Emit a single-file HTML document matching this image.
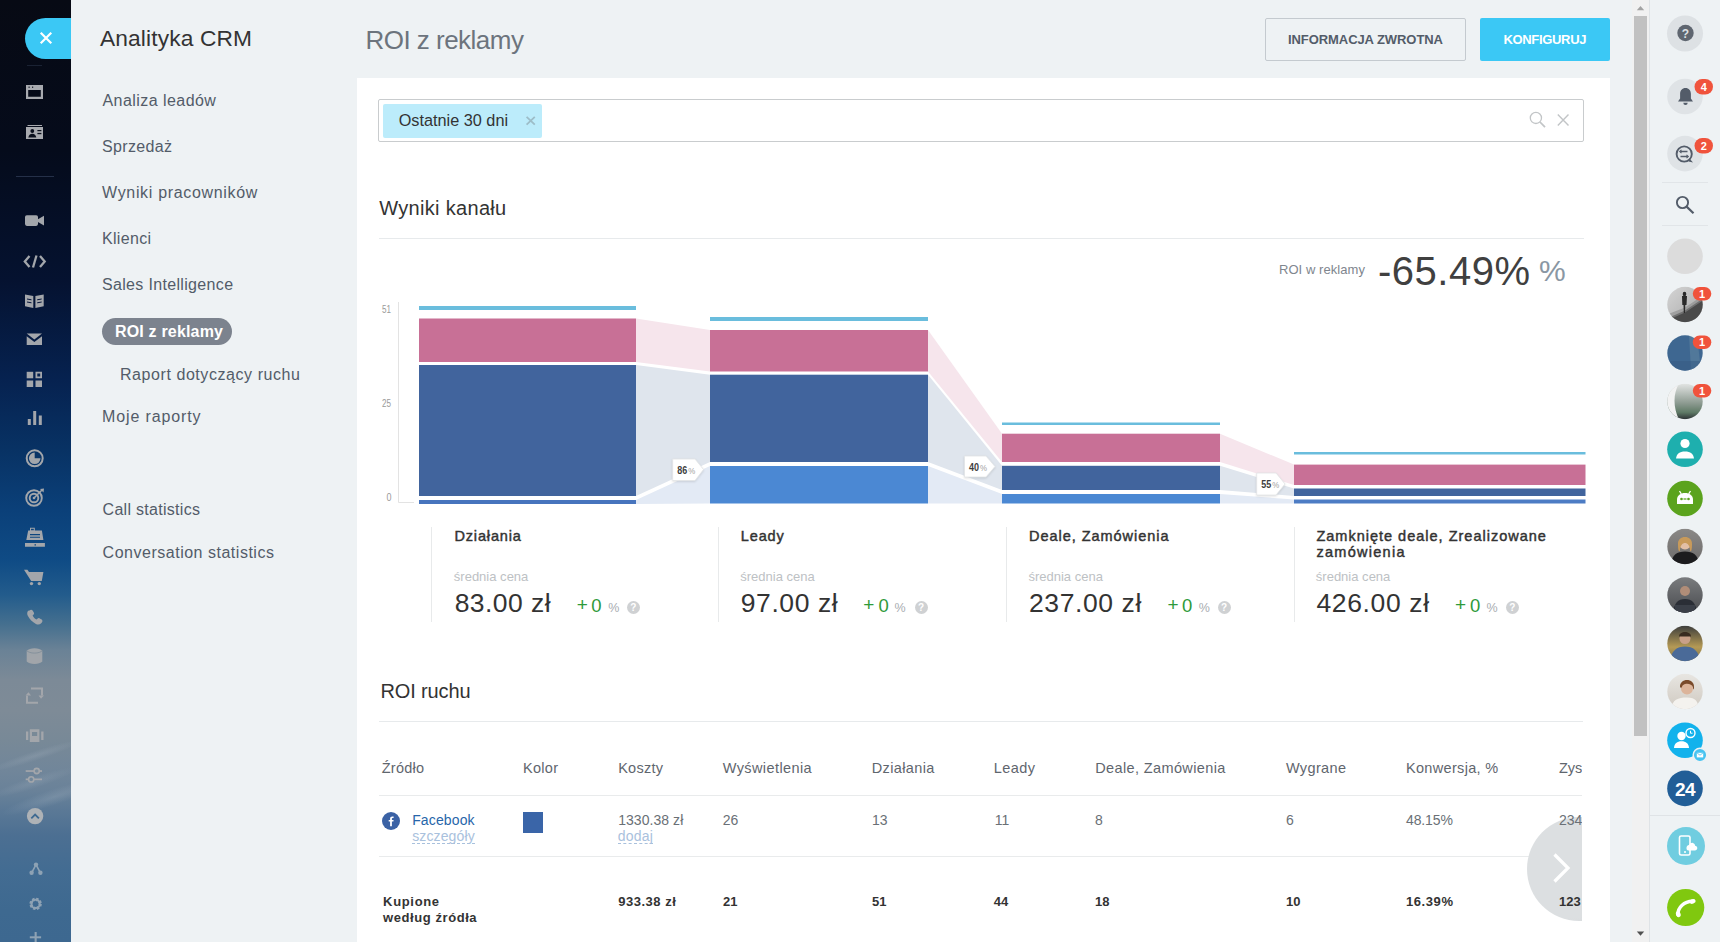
<!DOCTYPE html>
<html><head><meta charset="utf-8">
<style>
*{box-sizing:border-box;margin:0;padding:0}
html,body{width:1720px;height:942px;overflow:hidden;background:#eef2f4;font-family:"Liberation Sans",sans-serif;position:relative}
.t{position:absolute;white-space:nowrap;line-height:1}
.a{position:absolute}
</style></head><body>
<div class="a" style="left:0;top:0;width:71px;height:942px;background:linear-gradient(180deg,#070a14 0px,#050b1b 150px,#051230 280px,#062250 380px,#083264 450px,#0b4079 510px,#0f4b85 560px,#235c8c 595px,#46708f 625px,#6a8296 650px,#7c8a97 680px,#7e8b97 710px,#788997 740px,#71869a 770px,#6a8299 790px,#5b7996 810px,#4c6f92 835px,#436c92 870px,#3e6990 910px,#3d6890 942px)"></div>
<div class="a" style="left:0;top:700px;width:71px;height:140px;overflow:hidden"><div class="a" style="left:-30px;top:0px;width:140px;height:140px;transform:rotate(-18deg);background:radial-gradient(ellipse 50px 5px at 70px 55px,rgba(190,200,210,.18),transparent),radial-gradient(ellipse 45px 6px at 60px 80px,rgba(190,200,210,.16),transparent),radial-gradient(ellipse 55px 8px at 75px 100px,rgba(190,200,210,.2),transparent)"></div></div>
<div class="a" style="left:25px;top:18px;width:46px;height:41px;background:#3bc8f5;border-radius:21px 0 0 21px"></div>
<svg class="a" style="left:0;top:0" width="71" height="942" viewBox="0 0 71 942">
<g stroke="#fff" stroke-width="2.2" stroke-linecap="square"><path d="M41.5 33.5L50.5 42.5M50.5 33.5L41.5 42.5"/></g>
<g fill="#a8aaaf" stroke="none">
<!-- window -->
<path d="M26 85h17v14h-17z M28.2 90h12.6v6.8h-12.6z" fill-rule="evenodd"/>
<!-- card -->
<rect x="27.5" y="125" width="14.5" height="1"/>
<path d="M26 127h17v12h-17z" />
</g>
<g fill="#0a0f1c">
<rect x="28.5" y="86.6" width="1.2" height="1.2"/><rect x="32" y="86.6" width="1.2" height="1.2"/>
<circle cx="32.3" cy="131" r="1.9"/><path d="M28.3 137.5c0.4-2.4 1.8-3.8 4-3.8s3.6 1.4 4 3.8z"/>
<rect x="37.4" y="130" width="4" height="1.2"/><rect x="37.4" y="132.9" width="4" height="1.3"/>
</g>
<rect x="27" y="65" width="15" height="1" fill="#1a2233"/>
<rect x="16" y="176" width="38" height="1" fill="#253049"/>
<g fill="#a3a6ab">
<!-- video -->
<rect x="25" y="215.3" width="13" height="10.6" rx="1.8"/><path d="M37.5 219.5L44 215.8v9.6L37.5 221.7z"/>
<!-- code -->
<path d="M29.5 256L24.8 261.5L29.5 267" fill="none" stroke="#a3a6ab" stroke-width="2.3"/>
<path d="M40 256L44.7 261.5L40 267" fill="none" stroke="#a3a6ab" stroke-width="2.3"/>
<path d="M36.5 255.5L33 267.5" fill="none" stroke="#a3a6ab" stroke-width="2.3"/>
<!-- book -->
<path d="M25 294.5l8.3 1.5v12l-8.3-1.8z M43.7 294.5l-8.3 1.5v12l8.3-1.8z"/><path d="M27 299l4.5 0.8M27 302l4.5 0.8M37.2 299.8l4.5-0.8M37.2 302.8l4.5-0.8" stroke="#06153a" stroke-width="1"/>
<!-- envelope -->
<path d="M26.7 333.6h15.3l-7.65 5.8z M26.7 336.2l7.65 5.8 7.65-5.8v8.8h-15.3z"/>
<!-- grid -->
<rect x="26.7" y="371.8" width="6.5" height="6.5"/><path d="M35.5 371.8h6.5v6.5h-6.5z M37.3 373.6v2.9h2.9v-2.9z" fill-rule="evenodd"/>
<rect x="26.7" y="380.5" width="6.5" height="6.5"/><rect x="35.5" y="380.5" width="6.5" height="6.5"/>
<!-- bars -->
<rect x="27.8" y="419" width="3" height="6"/><rect x="33.2" y="411" width="3" height="14"/><rect x="38.8" y="415.5" width="3" height="9.5"/>
<!-- pie clock -->
<circle cx="34.7" cy="458.3" r="8" fill="none" stroke="#a3a6ab" stroke-width="2"/>
<path d="M34.7 452.5v5.8h5.8a5.8 5.8 0 1 1-5.8-5.8z"/>
<!-- target -->
<circle cx="34" cy="498" r="7.8" fill="none" stroke="#a3a6ab" stroke-width="1.9"/>
<circle cx="34" cy="498" r="4.3" fill="none" stroke="#a3a6ab" stroke-width="1.9"/>
<circle cx="34" cy="498" r="1.3"/>
<path d="M34 498L42 490" stroke="#a3a6ab" stroke-width="1.6"/><path d="M40 489l4-0.5-0.5 4z"/>
<!-- register -->
<path d="M30 527.8h4.8v3.4h-4.8z M31 528.8v1.6h2.8v-1.6z" fill-rule="evenodd"/><path d="M28.2 530.6h13.7l1.5 9.4h-17.1z M30 534v1.2h10v-1.2z M30 536.7v1.1h10v-1.1z" fill-rule="evenodd"/><path d="M25 543h19.9v3.7h-19.9z M34.5 544.2v1.3h1.5v-1.3z" fill-rule="evenodd"/>
<!-- cart -->
<path d="M24 569.8h3.4l1.6 2.2h14.4l-1.6 8.9h-10.6z"/><circle cx="31.5" cy="583.6" r="1.7"/><circle cx="39.3" cy="583.6" r="1.7"/>
<!-- phone -->
<path d="M29.5 610.5c1-1 2.4-1 3.1 0l1.2 2c0.5 0.8 0.3 1.7-0.4 2.3l-0.8 0.6c0.8 1.9 2.3 3.4 4.2 4.2l0.6-0.8c0.6-0.7 1.5-0.9 2.3-0.4l2 1.2c1 0.7 1 2.1 0 3.1l-0.8 0.8c-1.2 1.2-3.2 1.3-5 0.4-3.5-1.8-6.3-4.6-8.1-8.1-0.9-1.8-0.8-3.8 0.4-5z"/>
<!-- box -->
<path d="M34.5 648.3c3.5 0 6.3 1 7.8 2.4v10.8c-1.5 1.5-4.3 2.5-7.8 2.5s-6.3-1-7.8-2.5v-10.8c1.5-1.4 4.3-2.4 7.8-2.4z" opacity=".95"/><path d="M26.7 650.7c1.5 1.4 4.3 2.4 7.8 2.4s6.3-1 7.8-2.4" fill="none" stroke="#7d8c98" stroke-width=".8"/>
<!-- refresh -->
<path d="M31 688.5h11v7" fill="none" stroke="#a3a6ab" stroke-width="2"/><path d="M38 702.8h-11v-7" fill="none" stroke="#a3a6ab" stroke-width="2"/><path d="M25.5 695.5l3-3.2 2.5 3.2z M44 695.5l-3 3.2-2.5-3.2z" transform="translate(0 0)"/>
<!-- vibrate -->
<path d="M29.8 729.3h9.6v12.7h-9.6z M32 732v4h5.2v-4z" fill-rule="evenodd"/><rect x="26" y="731.5" width="2.3" height="8.5"/><rect x="41.2" y="731.5" width="2.3" height="8.5"/>
<!-- sliders -->
<rect x="25.7" y="770.2" width="16.3" height="1.7"/><rect x="25.7" y="778.5" width="16.3" height="1.7"/>
<circle cx="36.7" cy="771" r="2.6" fill="#7a8c9c" stroke="#a3a6ab" stroke-width="1.6"/><circle cx="31.2" cy="779.4" r="2.6" fill="#72889b" stroke="#a3a6ab" stroke-width="1.6"/>
</g>
<!-- up chevron circle -->
<circle cx="35.1" cy="816.1" r="8.2" fill="#aeb2b6"/>
<path d="M31.3 818.3L35.1 814.5L38.9 818.3" fill="none" stroke="#3f6a91" stroke-width="1.8"/>
<g fill="#8ea2b4">
<circle cx="36" cy="864.6" r="2.2"/><circle cx="31.6" cy="872.8" r="2.2"/><circle cx="40.4" cy="872.8" r="2.2"/>
<path d="M36 864.6L31.6 872.8M36 864.6L40.4 872.8" stroke="#8ea2b4" stroke-width="1.6"/>
<circle cx="35.6" cy="903.9" r="4.6" fill="none" stroke="#8ea2b4" stroke-width="3.2" stroke-dasharray="2.2 1.4"/>
<circle cx="35.6" cy="903.9" r="4.2" fill="none" stroke="#8ea2b4" stroke-width="2"/>
<rect x="34.6" y="932" width="2.1" height="12"/><rect x="29.8" y="936.3" width="11.3" height="2"/>
</g>
</svg>
<div class="t" style="left:100.00px;top:26.96px;font-size:22.75px;font-weight:normal;color:#333;letter-spacing:0.125px;">Analityka CRM</div>
<div class="t" style="left:102.50px;top:93.20px;font-size:16.0px;font-weight:normal;color:#535c69;letter-spacing:0.442px;">Analiza leadów</div>
<div class="t" style="left:102.00px;top:139.40px;font-size:16.0px;font-weight:normal;color:#535c69;letter-spacing:0.339px;">Sprzedaż</div>
<div class="t" style="left:102.00px;top:185.40px;font-size:16.0px;font-weight:normal;color:#535c69;letter-spacing:0.676px;">Wyniki pracowników</div>
<div class="t" style="left:102.00px;top:231.00px;font-size:16.0px;font-weight:normal;color:#535c69;letter-spacing:0.312px;">Klienci</div>
<div class="t" style="left:102.00px;top:277.00px;font-size:16.0px;font-weight:normal;color:#535c69;letter-spacing:0.331px;">Sales Intelligence</div>
<div class="a" style="left:102px;top:318px;width:130px;height:27px;border-radius:14px;background:#7c838e"></div>
<div class="t" style="left:115.00px;top:324.40px;font-size:16.0px;font-weight:bold;color:#fff;letter-spacing:0.177px;">ROI z reklamy</div>
<div class="t" style="left:120.00px;top:367.40px;font-size:16.0px;font-weight:normal;color:#535c69;letter-spacing:0.565px;">Raport dotyczący ruchu</div>
<div class="t" style="left:102.00px;top:409.00px;font-size:16.0px;font-weight:normal;color:#535c69;letter-spacing:0.875px;">Moje raporty</div>
<div class="t" style="left:102.60px;top:502.20px;font-size:16.0px;font-weight:normal;color:#535c69;letter-spacing:0.288px;">Call statistics</div>
<div class="t" style="left:102.60px;top:545.20px;font-size:16.0px;font-weight:normal;color:#535c69;letter-spacing:0.513px;">Conversation statistics</div>
<div class="t" style="left:365.50px;top:26.60px;font-size:26.0px;font-weight:normal;color:#6c747d;letter-spacing:-0.521px;">ROI z reklamy</div>
<div class="a" style="left:1265px;top:18px;width:201px;height:43px;border:1px solid #c4cacf;border-radius:2px"></div>
<div class="t" style="left:1288.00px;top:33.45px;font-size:13.0px;font-weight:bold;color:#535c69;letter-spacing:-0.074px;">INFORMACJA ZWROTNA</div>
<div class="a" style="left:1480px;top:18px;width:130px;height:43px;background:#3bc8f5;border-radius:2px"></div>
<div class="t" style="left:1503.40px;top:33.45px;font-size:13.0px;font-weight:bold;color:#fff;letter-spacing:-0.322px;">KONFIGURUJ</div>
<div class="a" style="left:357px;top:78px;width:1253px;height:864px;background:#fff"></div>
<div class="a" style="left:378px;top:99px;width:1206px;height:43px;border:1px solid #c9ccce;border-radius:2px"></div>
<div class="a" style="left:383px;top:104px;width:159px;height:34px;background:#bcecfb;border-radius:2px"></div>
<div class="t" style="left:398.70px;top:111.89px;font-size:16.25px;font-weight:normal;color:#333;letter-spacing:0.004px;">Ostatnie 30 dni</div>
<svg class="a" style="left:0;top:0;pointer-events:none" width="1720" height="942">
<path d="M526.6 116.8L534.8 124.6M534.8 116.8L526.6 124.6" stroke="#9dbdc8" stroke-width="1.8"/>
<circle cx="1535.9" cy="117.9" r="5.6" fill="none" stroke="#c2c5c7" stroke-width="1.3"/>
<path d="M1540 122L1545 127.2" stroke="#c2c5c7" stroke-width="1.8"/>
<path d="M1557.8 114.5L1568.5 125.6M1568.5 114.5L1557.8 125.6" stroke="#c2c5c7" stroke-width="1.4"/>
</svg>
<div class="t" style="left:379.30px;top:198.00px;font-size:20.0px;font-weight:normal;color:#333;letter-spacing:0.312px;">Wyniki kanału</div>
<div class="a" style="left:379px;top:238px;width:1205px;height:1px;background:#e7eaec"></div>
<div class="t" style="left:1279.00px;top:262.95px;font-size:13.0px;font-weight:normal;color:#80868e;letter-spacing:0.062px;">ROI w reklamy</div>
<div class="t" style="left:1378.00px;top:250.50px;font-size:40.0px;font-weight:normal;color:#404040;letter-spacing:0.500px;">-65.49%</div>
<div class="t" style="left:1539.00px;top:255.50px;font-size:30.0px;font-weight:normal;color:#8a97a3;letter-spacing:0.000px;">%</div>
<svg class="a" style="left:0;top:0" width="1720" height="942">
<g fill="#9a9a9a" font-family="Liberation Sans" font-size="10.5">
<text x="382" y="313" textLength="9" lengthAdjust="spacingAndGlyphs">51</text>
<text x="382" y="407" textLength="9" lengthAdjust="spacingAndGlyphs">25</text>
<text x="386.5" y="501" textLength="5" lengthAdjust="spacingAndGlyphs">0</text>
</g>
<path d="M398.5 302V502.5H414" fill="none" stroke="#e3e3e3" stroke-width="1"/>
<path d="M636 318.5L710 330L710 371.5L636 362z" fill="#f6e5ec"/>
<path d="M636 365L710 374.7L710 462L636 496z" fill="#dfe5ed"/>
<path d="M636 500L710 466L710 503.5L636 504z" fill="#e3eaf5"/>
<path d="M928 330L1002 433.7L1002 462L928 371.5z" fill="#f6e5ec"/>
<path d="M928 374.7L1002 465.8L1002 490L928 462z" fill="#dfe5ed"/>
<path d="M928 466L1002 494L1002 503.5L928 503.5z" fill="#e3eaf5"/>
<path d="M1220 433.7L1294 464.6L1294 485L1220 462z" fill="#f6e5ec"/>
<path d="M1220 465.8L1294 488.5L1294 496L1220 490z" fill="#dfe5ed"/>
<path d="M1220 494L1294 499.5L1294 503.5L1220 503.5z" fill="#e3eaf5"/>
<rect x="419" y="306" width="217" height="4" fill="#6abddd"/>
<rect x="419" y="318.5" width="217" height="43.5" fill="#c87096"/>
<rect x="419" y="365" width="217" height="131" fill="#41649d"/>
<rect x="419" y="500" width="217" height="4" fill="#4774bd"/>
<rect x="710" y="317" width="218" height="4" fill="#6abddd"/>
<rect x="710" y="330" width="218" height="41.5" fill="#c87096"/>
<rect x="710" y="374.7" width="218" height="87.30000000000001" fill="#41649d"/>
<rect x="710" y="466" width="218" height="37.5" fill="#4b88d3"/>
<rect x="1002" y="422.5" width="218" height="2.5" fill="#6abddd"/>
<rect x="1002" y="433.7" width="218" height="28.30000000000001" fill="#c87096"/>
<rect x="1002" y="465.8" width="218" height="24.19999999999999" fill="#41649d"/>
<rect x="1002" y="494" width="218" height="9.5" fill="#4b88d3"/>
<rect x="1294" y="452" width="291.5" height="2.5" fill="#6abddd"/>
<rect x="1294" y="464.6" width="291.5" height="20.399999999999977" fill="#c87096"/>
<rect x="1294" y="488.5" width="291.5" height="7.5" fill="#41649d"/>
<rect x="1294" y="499.5" width="291.5" height="4.0" fill="#4d7cc4"/>
<path d="M672.7 459H695L703.5 469.5L695 480.5H672.7z" fill="#fff" stroke="#e2e4e6" stroke-width="0.8" style="filter:drop-shadow(0 1px 1px rgba(0,0,0,.12))"/>
<text x="677.2" y="473.75" font-family="Liberation Sans" font-weight="bold" font-size="11" fill="#3d3d3d" textLength="10" lengthAdjust="spacingAndGlyphs">86</text><text x="688.2" y="473.75" font-family="Liberation Sans" font-size="8.5" fill="#a0a0a0" textLength="7" lengthAdjust="spacingAndGlyphs">%</text>
<path d="M964.5 456H986L995 466.5L986 477H964.5z" fill="#fff" stroke="#e2e4e6" stroke-width="0.8" style="filter:drop-shadow(0 1px 1px rgba(0,0,0,.12))"/>
<text x="969.0" y="470.5" font-family="Liberation Sans" font-weight="bold" font-size="11" fill="#3d3d3d" textLength="10" lengthAdjust="spacingAndGlyphs">40</text><text x="980.0" y="470.5" font-family="Liberation Sans" font-size="8.5" fill="#a0a0a0" textLength="7" lengthAdjust="spacingAndGlyphs">%</text>
<path d="M1256.7 473H1276L1285 484L1276 495H1256.7z" fill="#fff" stroke="#e2e4e6" stroke-width="0.8" style="filter:drop-shadow(0 1px 1px rgba(0,0,0,.12))"/>
<text x="1261.2" y="488.0" font-family="Liberation Sans" font-weight="bold" font-size="11" fill="#3d3d3d" textLength="10" lengthAdjust="spacingAndGlyphs">55</text><text x="1272.2" y="488.0" font-family="Liberation Sans" font-size="8.5" fill="#a0a0a0" textLength="7" lengthAdjust="spacingAndGlyphs">%</text>
</svg>
<div class="a" style="left:430.8px;top:527px;width:1px;height:95px;background:#e8eaeb"></div>
<div class="t" style="left:454.40px;top:528.67px;font-size:14.5px;font-weight:normal;color:#333;letter-spacing:0.856px;-webkit-text-stroke:0.45px #333;">Działania</div>
<div class="t" style="left:453.80px;top:569.75px;font-size:13.0px;font-weight:normal;color:#bdc1c4;letter-spacing:0.009px;">średnia cena</div>
<div class="t" style="left:454.70px;top:589.77px;font-size:26.5px;font-weight:normal;color:#333;letter-spacing:0.446px;">83.00 zł</div>
<div class="t" style="left:576.80px;top:594.85px;font-size:19.0px;font-weight:normal;color:#2e9a3a;letter-spacing:0.000px;">+</div>
<div class="t" style="left:591.30px;top:596.57px;font-size:18.5px;font-weight:normal;color:#2e9a3a;letter-spacing:0.000px;">0</div>
<div class="t" style="left:608.20px;top:601.88px;font-size:12.5px;font-weight:normal;color:#a9adb1;letter-spacing:0.000px;">%</div>
<div class="a" style="left:626.8px;top:601px;width:13px;height:13px;border-radius:50%;background:#cfd1d3;color:#fff;font:bold 10px/13px 'Liberation Sans';text-align:center">?</div>
<div class="a" style="left:718.0px;top:527px;width:1px;height:95px;background:#e8eaeb"></div>
<div class="t" style="left:740.80px;top:528.67px;font-size:14.5px;font-weight:normal;color:#333;letter-spacing:0.850px;-webkit-text-stroke:0.45px #333;">Leady</div>
<div class="t" style="left:740.20px;top:569.75px;font-size:13.0px;font-weight:normal;color:#bdc1c4;letter-spacing:0.009px;">średnia cena</div>
<div class="t" style="left:740.80px;top:589.77px;font-size:26.5px;font-weight:normal;color:#333;letter-spacing:0.575px;">97.00 zł</div>
<div class="t" style="left:863.20px;top:594.85px;font-size:19.0px;font-weight:normal;color:#2e9a3a;letter-spacing:0.000px;">+</div>
<div class="t" style="left:878.50px;top:596.57px;font-size:18.5px;font-weight:normal;color:#2e9a3a;letter-spacing:0.000px;">0</div>
<div class="t" style="left:894.60px;top:601.88px;font-size:12.5px;font-weight:normal;color:#a9adb1;letter-spacing:0.000px;">%</div>
<div class="a" style="left:914.5px;top:601px;width:13px;height:13px;border-radius:50%;background:#cfd1d3;color:#fff;font:bold 10px/13px 'Liberation Sans';text-align:center">?</div>
<div class="a" style="left:1005.8px;top:527px;width:1px;height:95px;background:#e8eaeb"></div>
<div class="t" style="left:1029.00px;top:528.67px;font-size:14.5px;font-weight:normal;color:#333;letter-spacing:0.961px;-webkit-text-stroke:0.45px #333;">Deale, Zamówienia</div>
<div class="t" style="left:1028.40px;top:569.75px;font-size:13.0px;font-weight:normal;color:#bdc1c4;letter-spacing:0.009px;">średnia cena</div>
<div class="t" style="left:1029.00px;top:589.77px;font-size:26.5px;font-weight:normal;color:#333;letter-spacing:0.600px;">237.00 zł</div>
<div class="t" style="left:1167.40px;top:594.85px;font-size:19.0px;font-weight:normal;color:#2e9a3a;letter-spacing:0.000px;">+</div>
<div class="t" style="left:1182.00px;top:596.57px;font-size:18.5px;font-weight:normal;color:#2e9a3a;letter-spacing:0.000px;">0</div>
<div class="t" style="left:1198.80px;top:601.88px;font-size:12.5px;font-weight:normal;color:#a9adb1;letter-spacing:0.000px;">%</div>
<div class="a" style="left:1217.5px;top:601px;width:13px;height:13px;border-radius:50%;background:#cfd1d3;color:#fff;font:bold 10px/13px 'Liberation Sans';text-align:center">?</div>
<div class="a" style="left:1293.5px;top:527px;width:1px;height:95px;background:#e8eaeb"></div>
<div class="t" style="left:1316.40px;top:528.67px;font-size:14.5px;font-weight:normal;color:#333;letter-spacing:1.000px;-webkit-text-stroke:0.45px #333;">Zamknięte deale, Zrealizowane</div>
<div class="t" style="left:1315.80px;top:569.75px;font-size:13.0px;font-weight:normal;color:#bdc1c4;letter-spacing:0.009px;">średnia cena</div>
<div class="t" style="left:1316.40px;top:589.77px;font-size:26.5px;font-weight:normal;color:#333;letter-spacing:0.637px;">426.00 zł</div>
<div class="t" style="left:1455.00px;top:594.85px;font-size:19.0px;font-weight:normal;color:#2e9a3a;letter-spacing:0.000px;">+</div>
<div class="t" style="left:1470.10px;top:596.57px;font-size:18.5px;font-weight:normal;color:#2e9a3a;letter-spacing:0.000px;">0</div>
<div class="t" style="left:1486.60px;top:601.88px;font-size:12.5px;font-weight:normal;color:#a9adb1;letter-spacing:0.000px;">%</div>
<div class="a" style="left:1505.7px;top:601px;width:13px;height:13px;border-radius:50%;background:#cfd1d3;color:#fff;font:bold 10px/13px 'Liberation Sans';text-align:center">?</div>
<div class="t" style="left:1316.40px;top:545.47px;font-size:14.5px;font-weight:normal;color:#333;letter-spacing:1.286px;-webkit-text-stroke:0.45px #333;">zamówienia</div>
<div class="t" style="left:380.40px;top:680.90px;font-size:20.0px;font-weight:normal;color:#333;letter-spacing:-0.128px;">ROI ruchu</div>
<div class="a" style="left:379px;top:721px;width:1204px;height:1px;background:#e7eaec"></div>
<div class="t" style="left:381.70px;top:760.88px;font-size:14.5px;font-weight:normal;color:#5f666e;letter-spacing:0.275px;">Źródło</div>
<div class="t" style="left:523.00px;top:760.88px;font-size:14.5px;font-weight:normal;color:#5f666e;letter-spacing:0.281px;">Kolor</div>
<div class="t" style="left:618.20px;top:760.88px;font-size:14.5px;font-weight:normal;color:#5f666e;letter-spacing:0.260px;">Koszty</div>
<div class="t" style="left:722.70px;top:760.88px;font-size:14.5px;font-weight:normal;color:#5f666e;letter-spacing:0.409px;">Wyświetlenia</div>
<div class="t" style="left:871.70px;top:760.88px;font-size:14.5px;font-weight:normal;color:#5f666e;letter-spacing:0.369px;">Działania</div>
<div class="t" style="left:993.80px;top:760.88px;font-size:14.5px;font-weight:normal;color:#5f666e;letter-spacing:0.425px;">Leady</div>
<div class="t" style="left:1095.20px;top:760.88px;font-size:14.5px;font-weight:normal;color:#5f666e;letter-spacing:0.380px;">Deale, Zamówienia</div>
<div class="t" style="left:1285.90px;top:760.88px;font-size:14.5px;font-weight:normal;color:#5f666e;letter-spacing:0.371px;">Wygrane</div>
<div class="t" style="left:1405.90px;top:760.88px;font-size:14.5px;font-weight:normal;color:#5f666e;letter-spacing:0.334px;">Konwersja, %</div>
<div class="a" style="left:379px;top:795px;width:1204px;height:1px;background:#e9ebec"></div>
<div class="a" style="left:379px;top:856px;width:1204px;height:1px;background:#e9ebec"></div>
<div class="a" style="left:1400px;top:745px;width:182px;height:197px;overflow:hidden"><div class="a" style="left:127px;top:72px;width:104px;height:104px;border-radius:50%;background:radial-gradient(circle at 40% 50%,#dcdfe1 60%,#d3d6d8)"></div></div>
<svg class="a" style="left:382px;top:812px" width="18" height="18" viewBox="0 0 18 18"><circle cx="9" cy="9" r="9" fill="#3b62a5"/><path d="M9.9 14.2V9.6h1.5l.2-1.7H9.9V6.8c0-.5.2-.8.8-.8h.9V4.5c-.2 0-.7-.1-1.3-.1-1.3 0-2.2.8-2.2 2.2v1.3H6.7v1.7h1.4v4.6z" fill="#fff"/></svg>
<div class="t" style="left:412.20px;top:813.00px;font-size:14.0px;font-weight:normal;color:#2766aa;letter-spacing:0.125px;">Facebook</div>
<div class="t" style="left:412.20px;top:828.70px;font-size:14.0px;font-weight:normal;color:#a9c1dd;letter-spacing:0.125px;">szczegóły</div>
<div class="a" style="left:412px;top:843px;width:63px;height:0;border-top:1px dashed #a9c1dd"></div>
<div class="a" style="left:523px;top:812px;width:20px;height:21px;background:#3a65a8"></div>
<div class="t" style="left:618.20px;top:813.00px;font-size:14.0px;font-weight:normal;color:#6a7076;letter-spacing:0.053px;">1330.38 zł</div>
<div class="t" style="left:617.80px;top:828.70px;font-size:14.0px;font-weight:normal;color:#a9c1dd;letter-spacing:0.188px;">dodaj</div>
<div class="a" style="left:618px;top:843px;width:35px;height:0;border-top:1px dashed #a9c1dd"></div>
<div class="t" style="left:722.70px;top:812.80px;font-size:14.0px;font-weight:normal;color:#6a7076;letter-spacing:0.000px;">26</div>
<div class="t" style="left:872.00px;top:812.80px;font-size:14.0px;font-weight:normal;color:#6a7076;letter-spacing:0.000px;">13</div>
<div class="t" style="left:994.80px;top:812.80px;font-size:14.0px;font-weight:normal;color:#6a7076;letter-spacing:0.000px;">11</div>
<div class="t" style="left:1095.00px;top:812.80px;font-size:14.0px;font-weight:normal;color:#6a7076;letter-spacing:0.000px;">8</div>
<div class="t" style="left:1286.00px;top:812.80px;font-size:14.0px;font-weight:normal;color:#6a7076;letter-spacing:0.000px;">6</div>
<div class="t" style="left:1406.00px;top:812.80px;font-size:14.0px;font-weight:normal;color:#6a7076;letter-spacing:-0.120px;">48.15%</div>
<div class="t" style="left:1559.00px;top:812.80px;font-size:14.0px;font-weight:normal;color:#6a7076;letter-spacing:0.000px;">234</div>
<div class="t" style="left:383.10px;top:894.95px;font-size:13.0px;font-weight:bold;color:#333;letter-spacing:0.667px;">Kupione</div>
<div class="t" style="left:383.12px;top:910.95px;font-size:13.0px;font-weight:bold;color:#333;letter-spacing:0.567px;">według źródła</div>
<div class="t" style="left:618.20px;top:894.95px;font-size:13.0px;font-weight:bold;color:#333;letter-spacing:0.512px;">933.38 zł</div>
<div class="t" style="left:723.00px;top:894.95px;font-size:13.0px;font-weight:bold;color:#333;letter-spacing:0.000px;">21</div>
<div class="t" style="left:872.00px;top:894.95px;font-size:13.0px;font-weight:bold;color:#333;letter-spacing:0.000px;">51</div>
<div class="t" style="left:993.80px;top:894.95px;font-size:13.0px;font-weight:bold;color:#333;letter-spacing:0.000px;">44</div>
<div class="t" style="left:1095.00px;top:894.95px;font-size:13.0px;font-weight:bold;color:#333;letter-spacing:0.000px;">18</div>
<div class="t" style="left:1286.00px;top:894.95px;font-size:13.0px;font-weight:bold;color:#333;letter-spacing:0.000px;">10</div>
<div class="t" style="left:1406.00px;top:894.95px;font-size:13.0px;font-weight:bold;color:#333;letter-spacing:0.575px;">16.39%</div>
<div class="t" style="left:1559.00px;top:894.95px;font-size:13.0px;font-weight:bold;color:#333;letter-spacing:0.000px;">123</div>
<div class="t" style="left:1558.90px;top:760.88px;font-size:14.5px;font-weight:normal;color:#5f666e;letter-spacing:0.000px;">Zys</div>
<svg class="a" style="left:1550px;top:850px" width="24" height="36"><path d="M4.5 4.5L18 18L4.5 31.5" fill="none" stroke="#fff" stroke-width="3.2"/></svg>
<div class="a" style="left:1582px;top:745px;width:28px;height:197px;background:#fff"></div>
<div class="a" style="left:1632px;top:0;width:17px;height:942px;background:#f1f1f1"></div>
<div class="a" style="left:1634px;top:16px;width:13px;height:720px;background:#c1c1c1"></div>
<svg class="a" style="left:1632px;top:0" width="17" height="942"><path d="M4.8 10.2L8.5 6L12.2 10.2z" fill="#a3a3a3"/><path d="M4.8 931.5L8.5 935.7L12.2 931.5z" fill="#505050"/></svg>
<div class="a" style="left:1649px;top:0;width:1px;height:942px;background:#dfe3e6"></div>
<svg class="a" style="left:1650px;top:0" width="70" height="942" viewBox="1650 0 70 942">
<circle cx="1685" cy="33.5" r="18" fill="#dde1e4"/><circle cx="1685.5" cy="33" r="8.2" fill="#5f6670"/><text x="1685.5" y="37.6" text-anchor="middle" font-family="Liberation Sans" font-weight="bold" font-size="12" fill="#dde1e4">?</text>
<circle cx="1685" cy="96.5" r="17.8" fill="#dfe3e6"/><path d="M1685.5 88c-3.3 0-5.4 2.6-5.4 5.8v4.8l-2.1 3h15l-2.1-3v-4.8c0-3.2-2.1-5.8-5.4-5.8z M1683.3 102.8h4.4a2.2 2.2 0 0 1-4.4 0z" fill="#535c69"/>
<rect x="1694.5" y="79" width="18.5" height="15.5" rx="7.75" fill="#f0533c"/><text x="1703.8" y="90.8" text-anchor="middle" font-family="Liberation Sans" font-weight="bold" font-size="11" fill="#fff">4</text>
<circle cx="1685" cy="153.6" r="17.8" fill="#dfe3e6"/><circle cx="1684.2" cy="154" r="7.6" fill="none" stroke="#535c69" stroke-width="1.9"/><path d="M1689.5 158.5l3.5 4l-4.5-1z" fill="#535c69"/><path d="M1680.5 151.5h7M1680.5 156.5h7" stroke="#535c69" stroke-width="1.3"/><path d="M1681.5 149.8l-1.8 1.7 1.8 1.7M1686.5 154.8l1.8 1.7-1.8 1.7" fill="none" stroke="#535c69" stroke-width="1.1"/>
<rect x="1694.5" y="138" width="18.5" height="15.5" rx="7.75" fill="#f0533c"/><text x="1703.8" y="149.8" text-anchor="middle" font-family="Liberation Sans" font-weight="bold" font-size="11" fill="#fff">2</text>
<rect x="1662" y="182" width="46" height="1" fill="#e1e5e8"/><circle cx="1682.5" cy="202.5" r="5.6" fill="none" stroke="#535c69" stroke-width="1.9"/><path d="M1686.6 206.6L1693.5 213.2" stroke="#535c69" stroke-width="2.2"/>
<rect x="1662" y="225" width="46" height="1" fill="#e1e5e8"/><defs><clipPath id="cc"><circle cx="0" cy="0" r="17.7"/></clipPath></defs>
<circle cx="1685" cy="256.3" r="17.8" fill="#dcdcdc"/>
<defs><linearGradient id="g1" x1="0" y1="0" x2="1" y2="1"><stop offset="0" stop-color="#dcdcdc"/><stop offset="0.5" stop-color="#9a9a9a"/><stop offset="1" stop-color="#3c3c3c"/></linearGradient><linearGradient id="g2" x1="0" y1="0" x2="1" y2="1"><stop offset="0" stop-color="#4d6d93"/><stop offset="0.6" stop-color="#3f6186"/><stop offset="1" stop-color="#6b8aa0"/></linearGradient><linearGradient id="g3" x1="0" y1="0" x2="0" y2="1"><stop offset="0" stop-color="#e3e5e4"/><stop offset="0.55" stop-color="#8c9a90"/><stop offset="0.8" stop-color="#5f7a66"/><stop offset="1" stop-color="#2c3034"/></linearGradient><linearGradient id="g4" x1="0" y1="0" x2="0" y2="1"><stop offset="0" stop-color="#8a8886"/><stop offset="1" stop-color="#6d6b6a"/></linearGradient><linearGradient id="g5" x1="0" y1="0" x2="0" y2="1"><stop offset="0" stop-color="#7a7c7e"/><stop offset="1" stop-color="#4a4c50"/></linearGradient><linearGradient id="g6" x1="0" y1="0" x2="0" y2="1"><stop offset="0" stop-color="#3c3d3c"/><stop offset="0.6" stop-color="#b59a55"/><stop offset="1" stop-color="#7a7050"/></linearGradient><linearGradient id="g7" x1="0" y1="0" x2="0" y2="1"><stop offset="0" stop-color="#e8e6e2"/><stop offset="1" stop-color="#cfc9c0"/></linearGradient></defs>
<g transform="translate(1685 304.5)"><g clip-path="url(#cc)"><rect x="-18" y="-18" width="36" height="36" fill="#d2d2d2"/><rect x="-18" y="-18" width="36" height="36" fill="url(#g1)" opacity=".35"/><path d="M-18 14L0 6L18 -6V18H-18z" fill="#4a4a4a"/><path d="M-18 10L0 3L18 -9V-4L0 8L-18 16z" fill="#8a8a8a" opacity=".6"/><ellipse cx="-0.5" cy="-10.5" rx="1.8" ry="2.2" fill="#2a2a2a"/><path d="M-3 -8.5h5l-0.5 9h-1.2l-0.3 8h-1.2l-0.3-8h-1.2z" fill="#2a2a2a"/></g></g>
<g transform="translate(1685 353)"><g clip-path="url(#cc)"><rect x="-18" y="-18" width="36" height="36" fill="#3e6791"/><path d="M4 -18L12 -18L16 18L6 18z" fill="#7d9fae" opacity=".3"/><rect x="-18" y="8" width="36" height="10" fill="#355a82" opacity=".5"/></g></g>
<g transform="translate(1685 401.5)"><g clip-path="url(#cc)"><rect x="-18" y="-18" width="36" height="36" fill="url(#g3)"/><path d="M-18 -18H-6C-12 -8 -12 6 -6 18H-18z" fill="#f2f2f2"/></g></g>
<circle cx="1685" cy="449.3" r="17.8" fill="#1eafae"/><circle cx="1685" cy="443.5" r="4.6" fill="#fff"/><path d="M1676 458.5c0.5-4.5 3.5-7 9-7s8.5 2.5 9 7z" fill="#fff"/>
<circle cx="1685" cy="498.5" r="17.8" fill="#5ba31d"/><path d="M1677 504v-4.5c0-4 3.6-6.5 8-6.5s8 2.5 8 6.5v4.5z" fill="#fff"/><path d="M1679.5 491l1.8 2.8M1690.5 491l-1.8 2.8" stroke="#fff" stroke-width="1.3"/><circle cx="1681.5" cy="499" r="1.3" fill="#5ba31d"/><circle cx="1688.5" cy="499" r="1.3" fill="#5ba31d"/><rect x="1683.5" y="498.4" width="3" height="1.2" fill="#5ba31d"/>
<g transform="translate(1685 546.5)"><g clip-path="url(#cc)"><rect x="-18" y="-18" width="36" height="36" fill="url(#g4)"/><path d="M-14 18C-13 8 -8 5 0 5S13 8 14 18z" fill="#1c1c1e"/><circle cx="0" cy="-3" r="6" fill="#e2bfa6"/><path d="M-7 -2C-8 -12 8 -12 7 -2C7 4 6 6 5 4C5 -6 -5 -6 -5 4C-6 6 -7 4 -7 -2z" fill="#c89a5a"/></g></g>
<g transform="translate(1685 595)"><g clip-path="url(#cc)"><rect x="-18" y="-18" width="36" height="36" fill="url(#g5)"/><path d="M-12 18C-11 8 -7 4 0 4S11 8 12 18z" fill="#2a2e36"/><circle cx="0" cy="-4" r="5" fill="#b08d78"/><rect x="-10" y="10" width="20" height="8" fill="#3a3f48"/></g></g>
<g transform="translate(1685 643.5)"><g clip-path="url(#cc)"><rect x="-18" y="-18" width="36" height="36" fill="url(#g6)"/><path d="M-15 18C-14 7 -8 3 0 3S14 7 15 18z" fill="#4a6a98"/><circle cx="0" cy="-5" r="5.5" fill="#c9a088"/><path d="M-6 -7C-6 -13 6 -13 6 -7z" fill="#3a2c20"/></g></g>
<g transform="translate(1685 691.5)"><g clip-path="url(#cc)"><rect x="-18" y="-18" width="36" height="36" fill="url(#g7)"/><path d="M-14 18C-13 8 -7 6 2 6S13 10 14 18z" fill="#f4f2ee"/><circle cx="2" cy="-3" r="6" fill="#dcb49a"/><path d="M-5 -4C-6 -14 10 -14 9 -4C9 -1 8 -2 8 -4C7 -9 -3 -9 -3 -4z" fill="#7a4a2a"/></g></g>
<circle cx="1685" cy="740.2" r="17.8" fill="#12b2ec"/><circle cx="1681.5" cy="736" r="4.2" fill="#fff"/><path d="M1674 748c0.4-4.5 3-6.7 7.5-6.7s7.1 2.2 7.5 6.7z" fill="#fff"/><circle cx="1690.5" cy="733" r="4.5" fill="#12b2ec" stroke="#fff" stroke-width="1.4"/><path d="M1690.5 730.8v2.4h2" fill="none" stroke="#fff" stroke-width="1"/><circle cx="1700" cy="755" r="6.8" fill="#47c3f0" stroke="#eef2f4" stroke-width="1.5"/><path d="M1696.8 752.8h6.4v4.6h-6.4z" fill="#fff"/><path d="M1696.8 752.8l3.2 2.4 3.2-2.4" fill="none" stroke="#47c3f0" stroke-width=".8"/>
<circle cx="1685" cy="788.4" r="17.8" fill="#215e97"/><text x="1685" y="795.5" text-anchor="middle" font-family="Liberation Sans" font-weight="bold" font-size="19" letter-spacing="-0.5" fill="#fff">24</text>
<rect x="1650" y="815" width="70" height="1" fill="#dfe3e6"/>
<circle cx="1686" cy="846" r="19" fill="#70cde0"/><rect x="1679.5" y="836" width="10.5" height="19" rx="1.6" fill="none" stroke="#fff" stroke-width="1.6"/><path d="M1684 852h2" stroke="#fff" stroke-width="1.4"/><path d="M1686.5 848.5c-.2-2 1-3.2 2.6-3.4.6-1.8 2.2-2.6 3.8-2.2 1.4.4 2.2 1.6 2.2 2.8 1.3.2 2.2 1.2 2.2 2.4 0 1.2-1 2.4-2.4 2.4h-6.6c-1 0-1.8-.8-1.8-2z" fill="#fff"/>
<circle cx="1685.7" cy="907.5" r="18.6" fill="#80c80f"/><path d="M1677.8 914.5C1678 907 1684 901.5 1692.5 901.2" fill="none" stroke="#fff" stroke-width="3.4" stroke-linecap="round"/><ellipse cx="1678.3" cy="914.2" rx="2.3" ry="3" fill="#fff" transform="rotate(-20 1678.3 914.2)"/><ellipse cx="1692.6" cy="901.4" rx="3" ry="2.3" fill="#fff" transform="rotate(-20 1692.6 901.4)"/>
<rect x="1692.8" y="287.0" width="18.5" height="13.5" rx="6.75" fill="#f0533c"/><text x="1702" y="297.5" text-anchor="middle" font-family="Liberation Sans" font-weight="bold" font-size="11" fill="#fff">1</text>
<rect x="1692.8" y="335.5" width="18.5" height="13.5" rx="6.75" fill="#f0533c"/><text x="1702" y="346" text-anchor="middle" font-family="Liberation Sans" font-weight="bold" font-size="11" fill="#fff">1</text>
<rect x="1692.8" y="384.0" width="18.5" height="13.5" rx="6.75" fill="#f0533c"/><text x="1702" y="394.5" text-anchor="middle" font-family="Liberation Sans" font-weight="bold" font-size="11" fill="#fff">1</text>
</svg>
</body></html>
